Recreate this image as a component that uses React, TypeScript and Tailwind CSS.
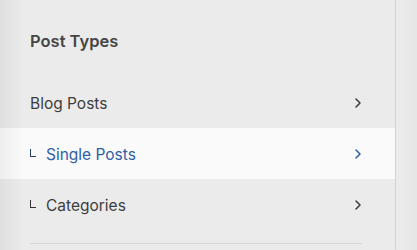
import { ChevronRight } from 'lucide-react';

const rows = [
  { label: 'Blog Posts', child: false, active: false },
  { label: 'Single Posts', child: true, active: true },
  { label: 'Categories', child: true, active: false },
];

export default function App() {
  return (
    <div className="flex h-[250px] w-[417px] overflow-hidden bg-[#ececec] font-['Inter',sans-serif]">
      <div className="relative w-[396px] shrink-0 border-r border-[#d3d3d3] bg-[#ebebeb]">
        <div className="px-[30px] pt-[31px] pb-[26px]">
          <h2 className="text-[16.5px] font-semibold leading-[20px] text-[#454545]">Post Types</h2>
        </div>
        <ul>
          {rows.map((row) => (
            <li
              key={row.label}
              className={
                row.active
                  ? 'flex h-[51px] items-center pt-[2px] pl-[30px] pr-[29px] bg-[#fafafa] text-[#2e60a3]'
                  : 'flex h-[51px] items-center pt-[2px] pl-[30px] pr-[29px] text-[#3d3d3d]'
              }
            >
              {row.child && (
                <span
                  className={
                    row.active
                      ? 'mr-[10px] mb-[3px] h-[8px] w-[6px] border-b border-l border-[#2a3f6b]'
                      : 'mr-[10px] mb-[3px] h-[8px] w-[6px] border-b border-l border-[#333]'
                  }
                />
              )}
              <span className="flex-1 text-[15.5px] leading-[20px]">{row.label}</span>
              <ChevronRight className="mb-[2px] h-[16px] w-[16px]" strokeWidth={2.3} />
            </li>
          ))}
        </ul>
        <div className="mx-[30px] mt-[13px] mr-[33px] border-t border-[#d6d6d6]" />
        <div className="pointer-events-none absolute inset-y-0 left-0 w-[24px] bg-gradient-to-r from-[rgba(0,0,0,0.05)] to-transparent" />
      </div>
      <div className="flex-1 bg-gradient-to-r from-[#ececec] to-[#e6e6e6]" />
    </div>
  );
}
